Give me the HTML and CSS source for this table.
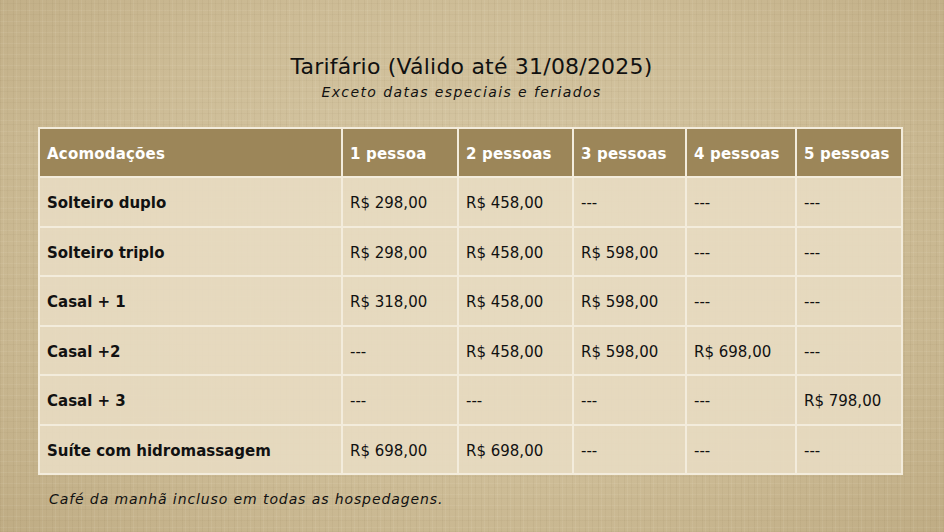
FILE: index.html
```
<!DOCTYPE html>
<html lang="pt-BR">
<head>
<meta charset="utf-8">
<title>Tarifário</title>
<link rel="stylesheet" href="styles.css">
</head>
<body>
<main class="page">
  <header class="heading">
    <h1 class="title">Tarifário (Válido até 31/08/2025)</h1>
    <p class="subtitle">Exceto datas especiais e feriados</p>
  </header>
  <table class="rates">
    <colgroup>
      <col class="c-name"><col class="c1"><col class="c2"><col class="c3"><col class="c4"><col class="c5">
    </colgroup>
    <thead>
      <tr><th>Acomodações</th><th>1 pessoa</th><th>2 pessoas</th><th>3 pessoas</th><th>4 pessoas</th><th>5 pessoas</th></tr>
    </thead>
    <tbody>
      <tr><td class="name">Solteiro duplo</td><td>R$ 298,00</td><td>R$ 458,00</td><td>---</td><td>---</td><td>---</td></tr>
      <tr><td class="name">Solteiro triplo</td><td>R$ 298,00</td><td>R$ 458,00</td><td>R$ 598,00</td><td>---</td><td>---</td></tr>
      <tr><td class="name">Casal + 1</td><td>R$ 318,00</td><td>R$ 458,00</td><td>R$ 598,00</td><td>---</td><td>---</td></tr>
      <tr><td class="name">Casal +2</td><td>---</td><td>R$ 458,00</td><td>R$ 598,00</td><td>R$ 698,00</td><td>---</td></tr>
      <tr><td class="name">Casal + 3</td><td>---</td><td>---</td><td>---</td><td>---</td><td>R$ 798,00</td></tr>
      <tr><td class="name">Suíte com hidromassagem</td><td>R$ 698,00</td><td>R$ 698,00</td><td>---</td><td>---</td><td>---</td></tr>
    </tbody>
  </table>
  <p class="note">Café da manhã incluso em todas as hospedagens.</p>
</main>
</body>
</html>
```
FILE: styles.css
```
html, body {
  margin: 0;
  padding: 0;
}
body {
  width: 944px;
  height: 532px;
  overflow: hidden;
  font-family: "DejaVu Sans", "Liberation Sans", sans-serif;
  color: #111;
  background-color: #cdbd98;
  background-image:
    repeating-linear-gradient(90deg, rgba(120, 100, 60, 0.07) 0 1px, transparent 1px 3px, rgba(255, 250, 235, 0.07) 3px 4px, transparent 4px 7px, rgba(110, 90, 50, 0.05) 7px 8px, transparent 8px 13px),
    repeating-linear-gradient(0deg, rgba(120, 100, 60, 0.05) 0 1px, transparent 1px 4px, rgba(255, 250, 235, 0.07) 4px 5px, transparent 5px 11px),
    radial-gradient(ellipse at 50% 45%, #d8caa8 0%, #cdbc96 60%, #bfac84 100%);
}
.page {
  box-sizing: border-box;
  width: 944px;
  height: 532px;
  padding: 52px 0 0 38px;
}
.heading {
  width: 863px;
  text-align: center;
  margin-bottom: 25px;
}
.title {
  margin: 0;
  font-weight: normal;
  font-size: 22px;
  line-height: 30px;
  letter-spacing: 0.2px;
  padding-left: 4px;
}
.subtitle {
  margin: 0;
  font-style: italic;
  font-size: 14px;
  line-height: 20px;
  letter-spacing: 1.4px;
  padding-right: 16px;
}
.rates {
  width: 863px;
  border-collapse: collapse;
  table-layout: fixed;
  border: 2px solid #f3ecdc;
}
.c-name { width: 303px; }
.c1 { width: 116px; }
.c2 { width: 115px; }
.c3 { width: 113px; }
.c4 { width: 110px; }
.c5 { width: 106px; }
.rates th,
.rates td {
  border: 2px solid #f3ecdc;
  text-align: left;
  padding: 3px 0 0 7px;
  white-space: nowrap;
}
.rates th {
  height: 44px;
  background: #9c8659;
  color: #fff;
  font-weight: bold;
  font-size: 15px;
  letter-spacing: 0.2px;
}
.rates td {
  height: 44.5px;
  background: rgba(232, 220, 194, 0.9);
  font-size: 15px;
}
.rates td.name {
  font-weight: bold;
}
.note {
  margin: 16px 0 0 11px;
  font-style: italic;
  font-size: 14px;
  letter-spacing: 0.9px;
}
```
